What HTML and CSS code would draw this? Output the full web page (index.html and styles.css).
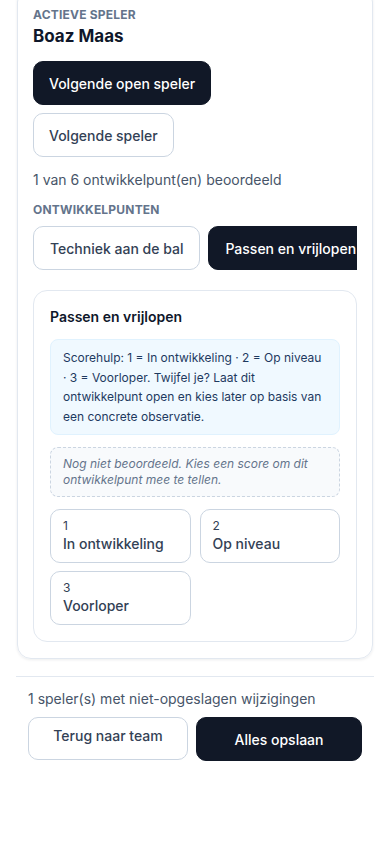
FILE: index.html
```html
<!DOCTYPE html>
<html lang="nl">
    <head>
        <meta charset="UTF-8">
        <meta name="viewport" content="width=device-width, initial-scale=1.0">
        <title>Beoordelen - Boaz Maas</title>
        <link rel="stylesheet" href="styles.css">
    </head>
    <body>
        <section class="card">
            <div class="label">Actieve speler</div>
            <h2 class="player">Boaz Maas</h2>

            <div class="nav-buttons">
                <button class="btn btn-dark">Volgende open speler</button>
                <button class="btn btn-light">Volgende speler</button>
            </div>

            <p class="progress">1 van 6 ontwikkelpunt(en) beoordeeld</p>

            <div class="label">Ontwikkelpunten</div>
            <div class="tabs">
                <button class="btn btn-light tab">Techniek aan de bal</button>
                <button class="btn btn-dark tab">Passen en vrijlopen</button>
            </div>

            <div class="point">
                <h3>Passen en vrijlopen</h3>
                <div class="hint">
                    Scorehulp: 1 = In ontwikkeling · 2 = Op niveau · 3 = Voorloper. Twijfel je? Laat dit ontwikkelpunt open en kies later op basis van een concrete observatie.
                </div>
                <div class="empty">
                    Nog niet beoordeeld. Kies een score om dit ontwikkelpunt mee te tellen.
                </div>
                <div class="scores">
                    <button class="score"><span class="num">1</span><span class="name">In ontwikkeling</span></button>
                    <button class="score"><span class="num">2</span><span class="name">Op niveau</span></button>
                    <button class="score"><span class="num">3</span><span class="name">Voorloper</span></button>
                </div>
            </div>
        </section>

        <footer class="footer">
            <p class="unsaved">1 speler(s) met niet-opgeslagen wijzigingen</p>
            <div class="footer-buttons">
                <button class="btn btn-light back">Terug naar team</button>
                <button class="btn btn-dark save">Alles opslaan</button>
            </div>
        </footer>
    </body>
</html>
```

FILE: styles.css
```css
body {
    font-family: Inter, 'Noto Sans', sans-serif;
    color: #0f172a;
    margin: 0;
    padding: 0 16px;
    background-color: #ffffff;
}
button {
    font-family: inherit;
    cursor: pointer;
}
.card {
    margin: -12px 1px 0;
    padding: 18px 15px 16px;
    border: 1px solid #e2e8f0;
    border-radius: 14px;
    box-shadow: 0 1px 3px rgba(15, 23, 42, 0.08);
}
.label {
    font-size: 12px;
    font-weight: 700;
    text-transform: uppercase;
    letter-spacing: 0.2px;
    color: #64748b;
    line-height: 16px;
}
.player {
    margin: 1px 0 0;
    font-size: 17px;
    font-weight: 700;
    line-height: 24px;
}
.nav-buttons {
    display: flex;
    flex-direction: column;
    align-items: flex-start;
    gap: 8px;
    margin-top: 13px;
}
.btn {
    font-size: 14px;
    font-weight: 500;
    height: 44px;
    padding: 0 15px;
    border-radius: 10px;
    white-space: nowrap;
}
.btn-dark {
    background-color: #111827;
    color: #ffffff;
    border: 1px solid #111827;
}
.btn-light {
    background-color: #ffffff;
    color: #334155;
    border: 1px solid #cbd5e1;
}
.progress {
    margin: 13px 0 12px;
    font-size: 14px;
    line-height: 20px;
    color: #475569;
}
.tabs {
    display: flex;
    gap: 8px;
    margin-top: 8px;
    overflow: hidden;
}
.tab {
    flex: 0 0 auto;
    padding: 0 16px;
}
.point {
    margin-top: 20px;
    padding: 16px 16px 16px;
    border: 1px solid #e2e8f0;
    border-radius: 14px;
}
.point h3 {
    margin: 0 0 12px;
    font-size: 14px;
    font-weight: 600;
    line-height: 20px;
    color: #0f172a;
}
.hint {
    background-color: #f0f9ff;
    border: 1px solid #e0f2fe;
    border-radius: 8px;
    padding: 8px 12px;
    font-size: 12px;
    line-height: 19.5px;
    color: #1e3a5f;
}
.empty {
    margin-top: 12px;
    background-color: #f8fafc;
    border: 1px dashed #cbd5e1;
    border-radius: 8px;
    padding: 8px 12px;
    font-size: 12px;
    line-height: 16px;
    font-style: italic;
    color: #64748b;
}
.scores {
    display: grid;
    grid-template-columns: 1fr 1fr;
    gap: 8px 9px;
    margin-top: 12px;
}
.score {
    display: flex;
    flex-direction: column;
    align-items: flex-start;
    height: 54px;
    padding: 8px 12px;
    background-color: #ffffff;
    border: 1px solid #cbd5e1;
    border-radius: 10px;
    color: #334155;
    text-align: left;
}
.num {
    font-size: 12px;
    line-height: 16px;
}
.name {
    font-size: 14px;
    font-weight: 500;
    line-height: 20px;
}
.footer {
    margin-top: 17px;
    padding: 12px 12px;
    border-top: 1px solid #e2e8f0;
}
.unsaved {
    margin: 0 0 8px;
    font-size: 14px;
    line-height: 20px;
    color: #475569;
}
.footer-buttons {
    display: flex;
    gap: 8px;
    align-items: flex-start;
}
.back {
    flex: 0 0 160px;
    height: 43px;
    padding-bottom: 6px;
}
.save {
    flex: 1;
}
```
